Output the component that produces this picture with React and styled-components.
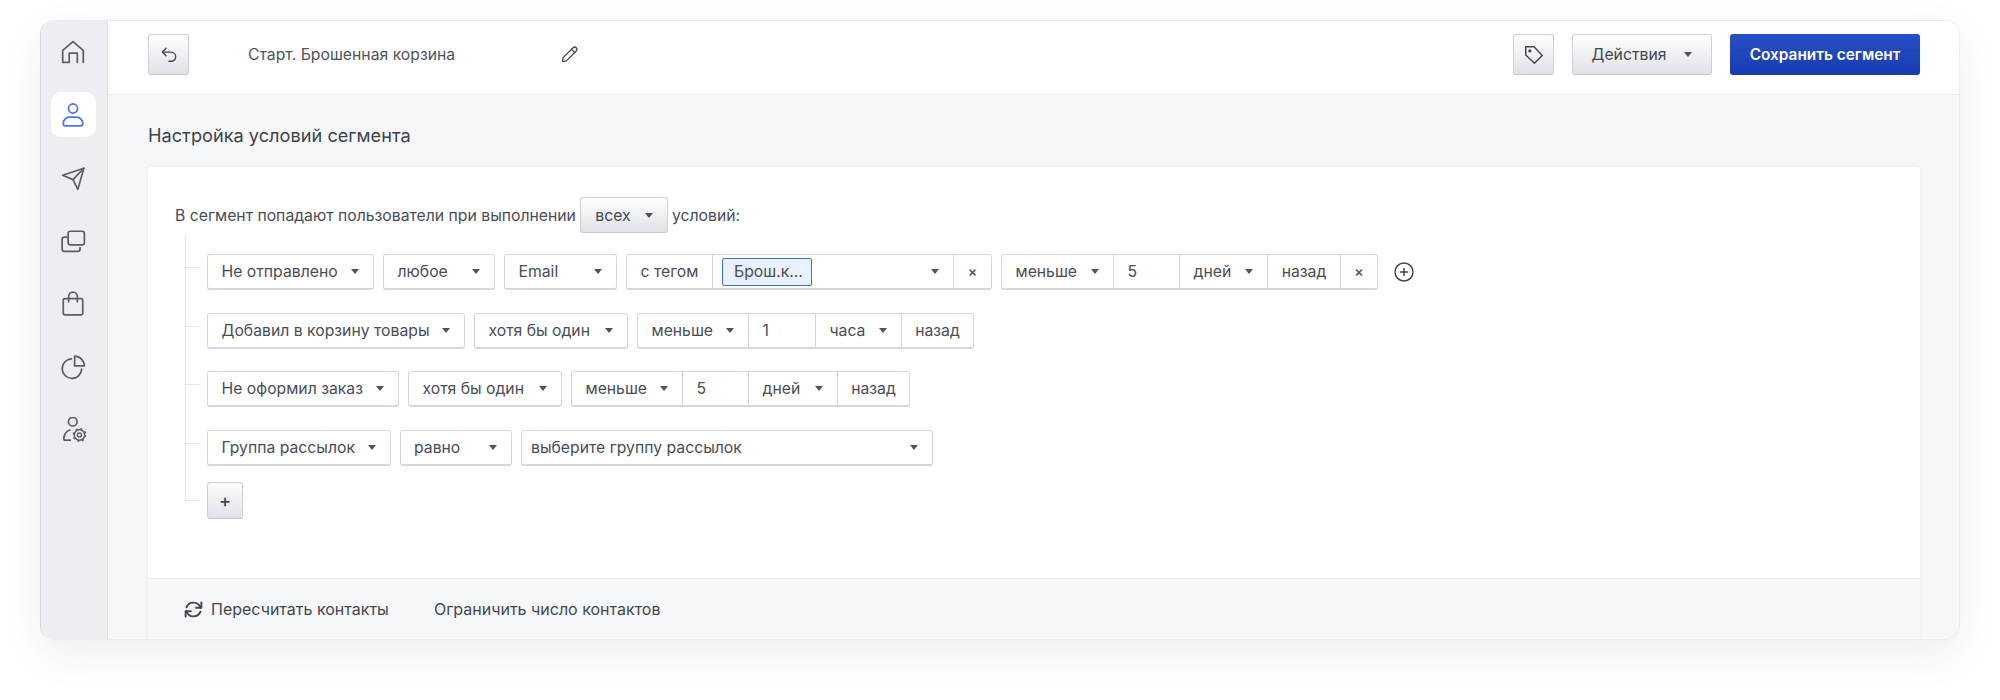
import React from 'react';
import styled, { createGlobalStyle } from 'styled-components';

const GlobalStyle = createGlobalStyle`
  html, body {
    margin: 0;
    background: #fff;
    font-family: Inter, "Noto Sans", "Liberation Sans", sans-serif;
    color: #44474f;
  }
  * { box-sizing: border-box; }
`;

const Page = styled.div`
  width: 2000px;
  height: 700px;
  padding: 20px 40px 60px;
  overflow: hidden;
`;

const Panel = styled.div`
  display: flex;
  height: 620px;
  border-radius: 14px;
  overflow: hidden;
  border: 1px solid #ebecf0;
  border-left-color: #d6d8dd;
  box-shadow: 0 14px 40px rgba(30, 34, 50, 0.08);
`;

const Sidebar = styled.nav`
  display: flex;
  flex-direction: column;
  align-items: center;
  flex: 0 0 67px;
  padding: 8px 1.5px 0 0;
  gap: 18px;
  background: #eceef2;
  border-right: 1px solid #dcdee3;
`;

const NavItem = styled.div`
  display: flex;
  align-items: center;
  justify-content: center;
  width: 45px;
  height: 45px;
  border-radius: 10px;
  color: ${(p) => (p.$active ? '#4f72ee' : '#5b5e66')};
  background: ${(p) => (p.$active ? '#fff' : 'transparent')};
`;

const Main = styled.main`
  display: flex;
  flex-direction: column;
  flex: 1;
  min-width: 0;
  background: #f6f7f9;
`;

const Header = styled.header`
  display: flex;
  align-items: center;
  flex: 0 0 74px;
  padding: 0 39px 6px 40px;
  background: #fff;
  border-bottom: 1px solid #ebecf0;
`;

const GradientButton = styled.button`
  display: inline-flex;
  align-items: center;
  justify-content: center;
  height: ${(p) => p.$h || 41}px;
  width: ${(p) => p.$w || 41}px;
  padding: 0;
  border: 1px solid #cdd0d6;
  border-bottom-color: #c3c6cd;
  border-radius: 3px;
  background: linear-gradient(#fefefe, #e0e2e7);
  color: #44474f;
  font: 400 15.75px Inter, sans-serif;
`;

const CampaignName = styled.div`
  width: 312px;
  margin-left: 59px;
  font-size: 15.75px;
  color: #50535b;
`;

const PencilWrap = styled.span`
  display: flex;
  color: #44474f;
`;

const HeaderSpacer = styled.div`
  flex: 1;
`;

const ActionsButton = styled(GradientButton)`
  gap: 18px;
  margin-left: 18px;
  margin-right: 18px;
`;

const SaveButton = styled.button`
  width: 190px;
  height: 41px;
  padding: 0;
  border: 0;
  border-radius: 3px;
  background: linear-gradient(#2751c7, #173bb0);
  color: #fff;
  font: 600 15.4px Inter, sans-serif;
`;

const Content = styled.section`
  display: flex;
  flex-direction: column;
  flex: 1;
  min-height: 0;
  padding: 0 39px 0 40px;
`;

const Title = styled.h2`
  margin: 0;
  padding: 29px 0 0;
  height: 72px;
  font-size: 18.2px;
  line-height: 22px;
  font-weight: 400;
  color: #3f424a;
`;

const Card = styled.div`
  display: flex;
  flex-direction: column;
  flex: 1;
  min-height: 0;
  background: #fff;
  border-radius: 3px 3px 0 0;
  box-shadow: 0 0 4px rgba(30, 34, 50, 0.06);
`;

const CardBody = styled.div`
  flex: 1;
  padding: 30px 0 0 27px;
`;

const Lead = styled.div`
  display: flex;
  align-items: center;
  gap: 4px;
  height: 36px;
  font-size: 15.75px;
  color: #4a4d55;
`;

const Tree = styled.div`
  display: flex;
  flex-direction: column;
  gap: 22.67px;
  margin-top: 21px;
  padding-left: 32px;
`;

const Row = styled.div`
  position: relative;
  display: flex;
  align-items: center;
  gap: 9px;
  height: 36px;
  margin-top: ${(p) => (p.$last ? -5.67 : 0)}px;

  &::before {
    content: '';
    position: absolute;
    left: -22px;
    width: 14px;
    top: ${(p) => (p.$first ? -19 : p.$last ? -41 : -45.67)}px;
    height: ${(p) => (p.$first ? 32 : p.$last ? 58 : 58.67)}px;
    border-left: 1px solid #e6e7ec;
    border-bottom: 1px solid #e6e7ec;
  }
`;

const Group = styled.div`
  display: flex;
  height: 36px;
  background: #fff;
  border: 1px solid #d5d7de;
  border-bottom-width: 2px;
  border-radius: 3px;
`;

const Cell = styled.div`
  display: flex;
  align-items: center;
  justify-content: ${(p) => (p.$center ? 'center' : 'space-between')};
  width: ${(p) => p.$w}px;
  padding: 0 ${(p) => (p.$center ? 0 : 14)}px 0 ${(p) => (p.$center ? 0 : p.$pl || 13.5)}px;
  font-size: 15.75px;
  color: #4a4d55;
  white-space: nowrap;

  & + & {
    border-left: 1px solid #d5d7de;
  }
`;

const Caret = styled.span`
  display: inline-block;
  width: 0;
  height: 0;
  margin-left: ${(p) => p.$gap || 0}px;
  border-left: 4.5px solid transparent;
  border-right: 4.5px solid transparent;
  border-top: 5px solid #50535b;
`;

const Close = styled.span`
  font-size: 14px;
  font-weight: 600;
  color: #5a5d65;
`;

const TagField = styled(Cell)`
  padding-left: 9px;
`;

const TagChip = styled.span`
  display: flex;
  align-items: center;
  width: 90px;
  height: 28px;
  padding-left: 11px;
  background: #e9f1fc;
  border: 1px solid #3f6fd8;
  border-radius: 2px;
`;

const AddCondition = styled.span`
  display: flex;
  margin-left: 5px;
  color: #44474f;
`;

const PlusLabel = styled.span`
  font-size: 18px;
  font-weight: 500;
`;

const Footer = styled.footer`
  display: flex;
  align-items: center;
  flex: 0 0 61px;
  padding-left: 35px;
  background: #f6f7f9;
  border-top: 1px solid #e8e9ed;
  font-size: 16px;
  color: #44474f;
`;

const FooterAction = styled.div`
  display: flex;
  align-items: center;
  gap: 7px;
  margin-right: 45px;
`;

const Icon = ({ children, size = 26, sw = 1.6 }) => (
  <svg width={size} height={size} viewBox="0 0 24 24" fill="none" stroke="currentColor" strokeWidth={sw} strokeLinecap="round" strokeLinejoin="round">
    {children}
  </svg>
);

const navIcons = [
  <Icon key="home"><path d="M2.5 21.5V10.500L12 2.500l9.500 8v11" /><path d="M2.500 21.500h6V13h7.500v8.500" /></Icon>,
  <Icon key="user"><circle cx="12" cy="6" r="4.200" /><path d="M8.500 14h7c3 0 5.500 3 5.500 5.500 0 1.400-.8 2.500-2 2.500H5c-1.200 0-2-1.100-2-2.500C3 17 5.500 14 8.500 14z" /></Icon>,
  <Icon key="send"><path d="M2.500 9.500 22 3l-5.500 19.500-4.500-9z" /><path d="M12 13.500 22 3" /></Icon>,
  <Icon key="copy"><rect x="7.500" y="3" width="15" height="12.500" rx="2" /><path d="M6 8.500H4a2 2 0 0 0-2 2v9a2 2 0 0 0 2 2h12.500a2 2 0 0 0 2-2V18" /></Icon>,
  <Icon key="bag"><rect x="3" y="7" width="18" height="15" rx="1.500" /><path d="M8 10V5a4 4 0 0 1 8 0v5" /></Icon>,
  <Icon key="pie"><path d="M10.500 4.500a9 9 0 1 0 9.500 9.500" /><path d="M13.500 2a9 9 0 0 1 9 9h-9z" /></Icon>,
  <Icon key="cog">
    <circle cx="11.800" cy="4.300" r="4" />
    <path d="M9 12C6 13 4 16 3.500 19.500c-.2 1.200.4 1.900 1.500 1.900h4.500" />
    <circle cx="18" cy="16.600" r="4.800" strokeWidth="1.400" />
    <circle cx="18" cy="16.600" r="5.800" strokeWidth="1.200" strokeDasharray="2 2.550" strokeLinecap="butt" />
    <circle cx="18" cy="16.600" r="1.900" strokeWidth="1.300" />
  </Icon>,
];

const Select = ({ w, children }) => (
  <Cell $w={w}>
    <span>{children}</span>
    <Caret />
  </Cell>
);

const Single = ({ w, children }) => (
  <Group>
    <Select w={w}>{children}</Select>
  </Group>
);

export default function App() {
  return (
    <Page>
      <GlobalStyle />
      <Panel>
        <Sidebar>
          {navIcons.map((icon, i) => (
            <NavItem key={i} $active={i === 1}>{icon}</NavItem>
          ))}
        </Sidebar>
        <Main>
          <Header>
            <GradientButton>
              <Icon size={20} sw={1.7}><path d="M8.500 4 4 8.500 8.500 13" /><path d="M4 8.500h10.500a5.500 5.500 0 0 1 0 11H12" /></Icon>
            </GradientButton>
            <CampaignName>Старт. Брошенная корзина</CampaignName>
            <PencilWrap>
              <Icon size={19} sw={1.6}><path d="M16.500 3.500a2.800 2.800 0 0 1 4 4L8 20l-5 1 1-5z" /><path d="m14.500 5.500 4 4" /></Icon>
            </PencilWrap>
            <HeaderSpacer />
            <GradientButton>
              <Icon size={22} sw={1.6}><path d="M3 3h9l9 9.500-8.500 8.500L3 12z" /><circle cx="7.500" cy="7.500" r="1" /></Icon>
            </GradientButton>
            <ActionsButton $w={140}>
              Действия
              <Caret />
            </ActionsButton>
            <SaveButton>Сохранить сегмент</SaveButton>
          </Header>
          <Content>
            <Title>Настройка условий сегмента</Title>
            <Card>
              <CardBody>
                <Lead>
                  В сегмент попадают пользователи при выполнении
                  <GradientButton $w={88} $h={36}>
                    <span>всех</span>
                    <Caret $gap={14} />
                  </GradientButton>
                  условий:
                </Lead>
                <Tree>
                  <Row $first>
                    <Single w={165}>Не отправлено</Single>
                    <Single w={110}>любое</Single>
                    <Single w={111}>Email</Single>
                    <Group>
                      <Cell $w={85} $center>с тегом</Cell>
                      <TagField $w={241}>
                        <TagChip>Брош.к...</TagChip>
                        <Caret />
                      </TagField>
                      <Cell $w={38} $center><Close>×</Close></Cell>
                    </Group>
                    <Group>
                      <Select w={111}>меньше</Select>
                      <Cell $w={66}>5</Cell>
                      <Select w={88}>дней</Select>
                      <Cell $w={73} $center>назад</Cell>
                      <Cell $w={37} $center><Close>×</Close></Cell>
                    </Group>
                    <AddCondition>
                      <Icon size={24} sw={1.5}><circle cx="12" cy="12" r="9" /><path d="M12 8.500v7M8.500 12h7" /></Icon>
                    </AddCondition>
                  </Row>
                  <Row>
                    <Single w={256}>Добавил в корзину товары</Single>
                    <Single w={152}>хотя бы один</Single>
                    <Group>
                      <Select w={110}>меньше</Select>
                      <Cell $w={67}>1</Cell>
                      <Select w={86}>часа</Select>
                      <Cell $w={72} $center>назад</Cell>
                    </Group>
                  </Row>
                  <Row>
                    <Single w={190}>Не оформил заказ</Single>
                    <Single w={152}>хотя бы один</Single>
                    <Group>
                      <Select w={110}>меньше</Select>
                      <Cell $w={66}>5</Cell>
                      <Select w={89}>дней</Select>
                      <Cell $w={72} $center>назад</Cell>
                    </Group>
                  </Row>
                  <Row>
                    <Single w={181.5}>Группа рассылок</Single>
                    <Single w={110.5}>равно</Single>
                    <Group>
                      <Cell $w={410} $pl={9}>
                        <span>выберите группу рассылок</span>
                        <Caret />
                      </Cell>
                    </Group>
                  </Row>
                  <Row $last>
                    <GradientButton $w={36} $h={37}>
                      <PlusLabel>+</PlusLabel>
                    </GradientButton>
                  </Row>
                </Tree>
              </CardBody>
              <Footer>
                <FooterAction>
                  <Icon size={21} sw={2.2}><path d="M21 4v6h-6" /><path d="M3 20v-6h6" /><path d="M4 9.500A8.500 8.500 0 0 1 20 10" /><path d="M20 14.500A8.500 8.500 0 0 1 4 14" /></Icon>
                  Пересчитать контакты
                </FooterAction>
                <FooterAction>Ограничить число контактов</FooterAction>
              </Footer>
            </Card>
          </Content>
        </Main>
      </Panel>
    </Page>
  );
}
